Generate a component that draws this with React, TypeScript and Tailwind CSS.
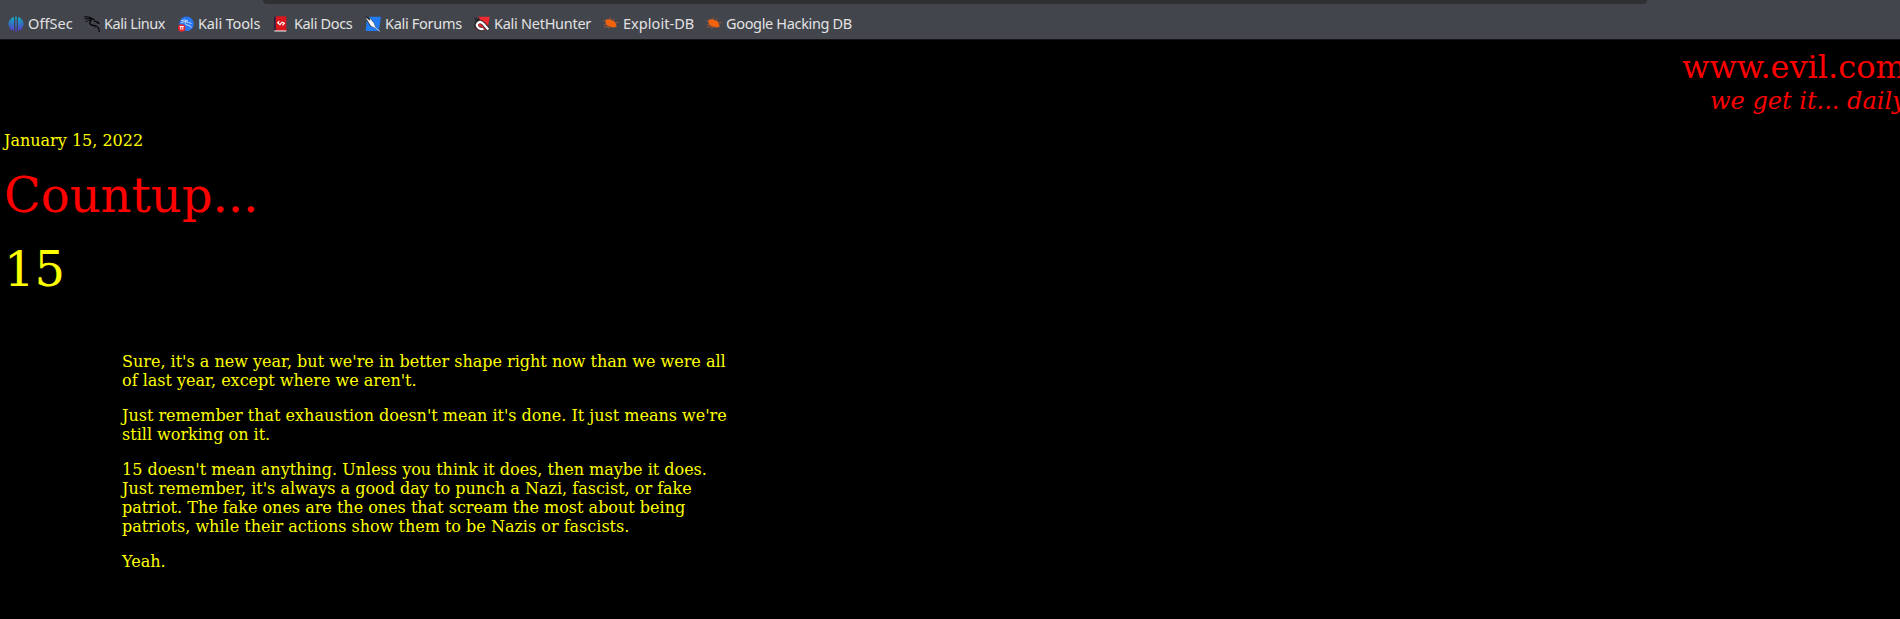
import type { ReactNode } from "react";

const OffSecIcon = () => (
  <svg viewBox="0 0 16 16" className="h-4 w-4 shrink-0">
    <defs>
      <linearGradient id="offsec" x1="0" y1="0" x2="0" y2="16" gradientUnits="userSpaceOnUse">
        <stop offset="0" stopColor="#10b4c4" />
        <stop offset="0.5" stopColor="#2f78cc" />
        <stop offset="1" stopColor="#6030d8" />
      </linearGradient>
    </defs>
    <path fill="url(#offsec)" d="M6 .9v13.800Q.5 13.300.5 8T6 .9zM7.300.600h1.400v15H7.300zM10 .9q5.500 1.800 5.500 7.100T10 14.700z" />
    <path d="M2.900 3v10M13.100 3v10" stroke="#3b5f87" strokeWidth=".4" />
  </svg>
);

const DragonIcon = () => (
  <svg viewBox="0 0 16 16" className="h-4 w-4 shrink-0" fill="none" stroke="#050506" strokeLinecap="round">
    <path d="M.5 .8Q4 .3 7 1.600M1 3Q4 1.500 8 3.300M2 5.700Q4 3.800 7 3.900" strokeWidth="1" />
    <path d="M6 2.300Q9 2 10.500 4.300M10.500 5.500l3 .2 1.500 1.500-2-.2" strokeWidth="1.100" />
    <path d="M7 4.300Q5 6.500 6.500 8.200T11 9.500Q15 10.700 15.300 15.500" strokeWidth="1.300" />
    <path d="M11.800 10.200l-1 1.600" strokeWidth=".7" />
  </svg>
);

const ToolsIcon = () => (
  <svg viewBox="0 0 16 16" className="h-4 w-4 shrink-0">
    <circle cx="8.500" cy="7.800" r="7.300" fill="#2877f5" />
    <path d="M3 4.600Q7 3.200 10 5M3 6.800Q7 4.300 10.500 6.500l3 1M8 5.500Q6 8.300 9 8.900q4 .5 4.500 3" fill="none" stroke="#c2d9ff" strokeWidth="1" />
    <circle cx="3.700" cy="12" r="3.700" fill="#e3262e" />
    <path d="M1.700 10.500h4M2.800 10.500v3.200M4.800 10.500v3.200" fill="none" stroke="#fff" strokeWidth="1" />
  </svg>
);

const DocsIcon = () => (
  <svg viewBox="0 0 16 16" className="h-4 w-4 shrink-0">
    <path d="M0 .5h3.500V15H0z" fill="#28233f" />
    <path d="M1.800.300H12.300V15H1.800z" fill="#d9161c" />
    <path d="M.3 14.300h12v1.300H.3z" fill="#d5cfd1" />
    <path d="M5.200 5.200L3.700 7l2.300 1.600L8 6.200l2.300 1-1.800 2.200" fill="none" stroke="#fff" strokeWidth="1.200" />
  </svg>
);

const ForumsIcon = () => (
  <svg viewBox="0 0 16 16" className="h-4 w-4 shrink-0">
    <path d="M4 .800h12L13.800 15H.6L1.700 5z" fill="#217bf2" />
    <path d="M0 .2l4.500 1.300 4.300 4.800 1.800 5L15.500 16l-4.400-3.200L5.200 10 2 5z" fill="#20242d" />
    <path d="M1.200 2l4 3.300-.2-2.600L8.600 7l1.500 4.300L14.900 15.500 10.500 12 6 9.700z" fill="#fff" stroke="#fff" strokeWidth=".4" />
  </svg>
);

const NetHunterIcon = () => (
  <svg viewBox="0 0 16 16" className="h-4 w-4 shrink-0">
    <path d="M4 .800h11.800L13.300 13.500H1.500z" fill="#ed2931" />
    <path d="M0 1l3 1.500L5 1l1 4-5 5 .5-5z" fill="#292a30" />
    <path d="M14.500 13.300L8.800 7.200Q5.200 4.200 3 7.500T5 12.500l4.500 1" fill="none" stroke="#2b2328" strokeWidth="4" />
    <path d="M14.300 13.500L9.300 7.800Q6 4.500 3.700 7.200T5 12.200q2 1.200 4.500.6" fill="none" stroke="#fff" strokeWidth="2.300" />
  </svg>
);

const BugIcon = () => (
  <svg viewBox="0 0 16 16" className="h-4 w-4 shrink-0">
    <path d="M3 3.600Q6.500 2.600 9.500 4.500q2 .200 3.200 2.800 1.300 2 .3 3.800-3 .8-5.500-.3Q3 9.800 2.300 6.300z" fill="#f4620c" />
    <path d="M3 5.300L.3 4.600M4 8L.8 9M6 10L1 11.400M8 10.500l-3 2M7 4l.4-2.600M10 4.700l.9-2.200M12 7l3.500-.8M12 9.500l1.800 1.400" fill="none" stroke="#b95c31" strokeWidth=".8" />
  </svg>
);

type BookmarkProps = { icon: ReactNode; label: string; className: string };

const Bookmark = ({ icon, label, className }: BookmarkProps) => (
  <a className={`flex h-4 shrink-0 items-center gap-1 ${className}`}>
    {icon}
    <span className="whitespace-nowrap pb-0.5">{label}</span>
  </a>
);

export default function App() {
  return (
    <div className="flex h-[619px] w-full flex-col overflow-hidden bg-black">
      <header className="h-10 shrink-0 border-b border-[#15151a] bg-[#42454c]">
        <div className="ml-[263px] h-1 w-[1384px] rounded-b bg-[#2f3034]" />
        <nav className="flex pt-3 pl-2 font-['Noto_Sans',sans-serif] text-[14.5px] leading-4 text-[#e2e2e3]">
          <Bookmark icon={<OffSecIcon />} label="OffSec" className="w-[76px] tracking-[0.08px]" />
          <Bookmark icon={<DragonIcon />} label="Kali Linux" className="w-[94px] tracking-[-0.42px]" />
          <Bookmark icon={<ToolsIcon />} label="Kali Tools" className="w-[96px] tracking-[-0.14px]" />
          <Bookmark icon={<DocsIcon />} label="Kali Docs" className="w-[91px] tracking-[-0.37px]" />
          <Bookmark icon={<ForumsIcon />} label="Kali Forums" className="w-[109px] tracking-[-0.3px]" />
          <Bookmark icon={<NetHunterIcon />} label="Kali NetHunter" className="w-[129px] tracking-[-0.27px]" />
          <Bookmark icon={<BugIcon />} label="Exploit-DB" className="w-[103px] tracking-[0.05px]" />
          <Bookmark icon={<BugIcon />} label="Google Hacking DB" className="w-[150px] tracking-[-0.34px]" />
        </nav>
      </header>
      <main className="font-['DejaVu_Serif',serif] text-base leading-[19px] text-[#ffff00]">
        <div className="flex flex-col pt-2 text-[#ff0000]">
          <div className="ml-[1682px] whitespace-nowrap text-[32px] leading-[38px]">www.evil.com</div>
          <div className="mt-px ml-[1710px] whitespace-nowrap text-2xl leading-7 italic">we get it... daily</div>
        </div>
        <div className="mt-4 pl-1">January 15, 2022</div>
        <h1 className="mt-[17px] pl-1 text-5xl leading-[56px] text-[#ff0000]">Countup...</h1>
        <div className="mt-[18px] pl-1 text-5xl leading-[56px]">15</div>
        <div className="mt-[55px] ml-[122px] flex w-[610px] flex-col gap-4">
          <p>Sure, it's a new year, but we're in better shape right now than we were all of last year, except where we aren't.</p>
          <p>Just remember that exhaustion doesn't mean it's done. It just means we're still working on it.</p>
          <p>15 doesn't mean anything. Unless you think it does, then maybe it does. Just remember, it's always a good day to punch a Nazi, fascist, or fake patriot. The fake ones are the ones that scream the most about being patriots, while their actions show them to be Nazis or fascists.</p>
          <p>Yeah.</p>
        </div>
      </main>
    </div>
  );
}
